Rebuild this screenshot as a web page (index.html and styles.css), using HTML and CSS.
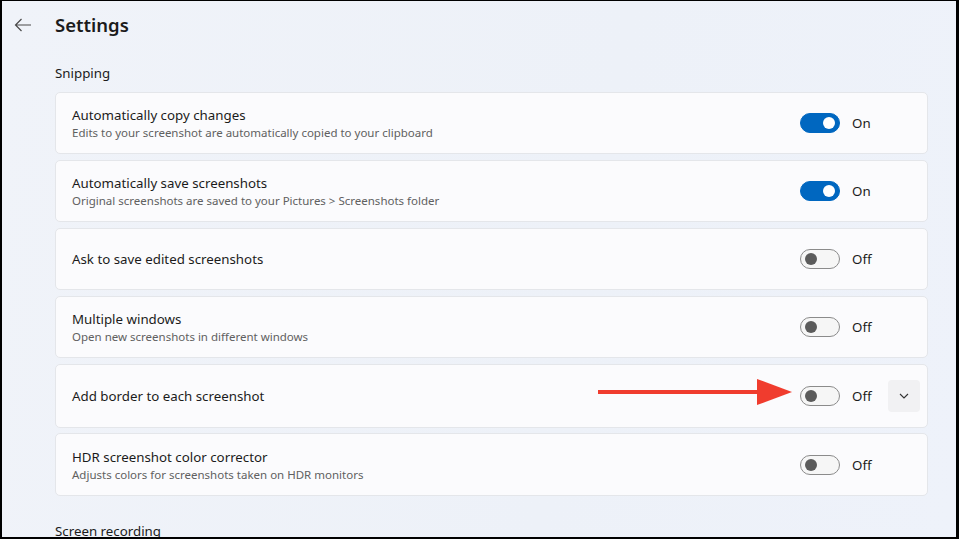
FILE: index.html
```html
<!DOCTYPE html>
<html>
<head>
    <title>Settings</title>
    <link rel="stylesheet" href="styles.css">
</head>
<body>
    <div class="window">
        <div class="header">
            <button class="back-button" aria-label="Back">
                <svg width="18" height="14" viewBox="0 0 18 14">
                    <path d="M17 7H1.5M7.5 1L1.5 7l6 6" fill="none" stroke="#4a4a4a" stroke-width="1.2"/>
                </svg>
            </button>
            <h1>Settings</h1>
        </div>

        <div class="section-label">Snipping</div>

        <div class="card-list">
            <div class="card">
                <div class="card-text">
                    <div class="card-title">Automatically copy changes</div>
                    <div class="card-desc">Edits to your screenshot are automatically copied to your clipboard</div>
                </div>
                <div class="toggle on"><span class="knob"></span></div>
                <div class="toggle-label">On</div>
                <div class="expand-slot"></div>
            </div>

            <div class="card">
                <div class="card-text">
                    <div class="card-title">Automatically save screenshots</div>
                    <div class="card-desc">Original screenshots are saved to your Pictures &gt; Screenshots folder</div>
                </div>
                <div class="toggle on"><span class="knob"></span></div>
                <div class="toggle-label">On</div>
                <div class="expand-slot"></div>
            </div>

            <div class="card">
                <div class="card-text">
                    <div class="card-title">Ask to save edited screenshots</div>
                </div>
                <div class="toggle"><span class="knob"></span></div>
                <div class="toggle-label">Off</div>
                <div class="expand-slot"></div>
            </div>

            <div class="card">
                <div class="card-text">
                    <div class="card-title">Multiple windows</div>
                    <div class="card-desc">Open new screenshots in different windows</div>
                </div>
                <div class="toggle"><span class="knob"></span></div>
                <div class="toggle-label">Off</div>
                <div class="expand-slot"></div>
            </div>

            <div class="card card-tall">
                <div class="card-text">
                    <div class="card-title">Add border to each screenshot</div>
                </div>
                <div class="toggle"><span class="knob"></span></div>
                <div class="toggle-label">Off</div>
                <div class="expand-slot">
                    <button class="expand-button" aria-label="Expand">
                        <svg width="10" height="6" viewBox="0 0 10 6">
                            <path d="M1 1l4 4 4-4" fill="none" stroke="#333" stroke-width="1.1"/>
                        </svg>
                    </button>
                </div>
            </div>

            <div class="card card-last">
                <div class="card-text">
                    <div class="card-title">HDR screenshot color corrector</div>
                    <div class="card-desc">Adjusts colors for screenshots taken on HDR monitors</div>
                </div>
                <div class="toggle"><span class="knob"></span></div>
                <div class="toggle-label">Off</div>
                <div class="expand-slot"></div>
            </div>
        </div>

        <div class="section-label section-next">Screen recording</div>

        <svg class="pointer-arrow" width="196" height="28" viewBox="0 0 196 28">
            <rect x="0" y="12" width="162" height="4" fill="#f03c2e"/>
            <polygon points="159,1 194,14 159,27" fill="#f03c2e"/>
        </svg>
    </div>
</body>
</html>
```

FILE: styles.css
```css
html {
    background-color: #000;
}

body {
    margin: 0;
    padding: 0;
    font-family: "Noto Sans", "Open Sans", sans-serif;
    color: #1b1b1b;
}

.window {
    position: relative;
    box-sizing: border-box;
    height: 539px;
    overflow: hidden;
    border-top: 1px solid #000;
    border-left: 2px solid #000;
    border-right: 3px solid #000;
    border-bottom: 2px solid #000;
    background: linear-gradient(100deg, #f0f3f9 0%, #edf1f8 60%, #eef2fa 100%);
    padding: 0 28px 0 53px;
}

.header {
    display: flex;
    align-items: center;
    height: 48px;
    margin-left: -53px;
}

.back-button {
    width: 53px;
    height: 40px;
    border: none;
    background: none;
    padding: 0 0 0 12px;
    display: flex;
    align-items: center;
}

h1 {
    margin: 0;
    font-size: 18.5px;
    font-weight: 600;
    line-height: 28px;
    color: #1b1b1b;
}

.section-label {
    margin-top: 14px;
    margin-bottom: 9px;
    font-size: 13.3px;
    line-height: 20px;
    color: #1b1b1b;
}

.section-next {
    margin-top: 25px;
}

.card-list {
    display: flex;
    flex-direction: column;
    gap: 6px;
}

.card {
    display: flex;
    align-items: center;
    box-sizing: border-box;
    height: 62px;
    padding: 0 7px 0 16px;
    background-color: #fbfbfd;
    border: 1px solid #e4e6ea;
    border-radius: 5px;
}

.card-tall {
    height: 64px;
}

.card-last {
    height: 63px;
    margin-top: -1px;
}

.card-text {
    flex: 1;
}

.card-title {
    font-size: 13.3px;
    line-height: 20px;
    color: #1b1b1b;
}

.card-desc {
    font-size: 11.5px;
    line-height: 16px;
    color: #606060;
}

.toggle {
    position: relative;
    box-sizing: border-box;
    width: 40px;
    height: 20px;
    border-radius: 10px;
    border: 1px solid #8b8b8b;
    background-color: #f6f6f6;
}

.toggle .knob {
    position: absolute;
    top: 3px;
    left: 4px;
    width: 12px;
    height: 12px;
    border-radius: 50%;
    background-color: #5b5b5b;
}

.toggle.on {
    border-color: #0067c0;
    background-color: #0067c0;
}

.toggle.on .knob {
    left: 22px;
    background-color: #fff;
}

.toggle-label {
    width: 36px;
    margin-left: 12px;
    font-size: 13.3px;
    line-height: 20px;
    color: #1b1b1b;
}

.expand-slot {
    width: 32px;
    height: 32px;
}

.expand-button {
    width: 32px;
    height: 32px;
    border: none;
    border-radius: 4px;
    background-color: #f1f1f3;
    display: flex;
    align-items: center;
    justify-content: center;
    padding: 0;
}

.pointer-arrow {
    position: absolute;
    left: 596px;
    top: 377px;
}
```
